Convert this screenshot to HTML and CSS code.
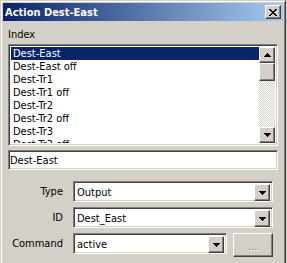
FILE: index.html
```html
<!DOCTYPE html>
<html lang="en">
<head>
  <meta charset="UTF-8" />
  <title>Action Dest-East</title>
  <link rel="stylesheet" href="styles.css">
</head>
<body>
<div class="window">
  <div class="titlebar">
    <span class="title">Action Dest-East</span>
    <div class="close-btn">
      <svg width="8" height="7" viewBox="0 0 8 7" shape-rendering="crispEdges"><path d="M0 0h2v1H0z M6 0h2v1H6z M1 1h2v1H1z M5 1h2v1H5z M2 2h4v1H2z M3 3h2v1H3z M2 4h4v1H2z M1 5h2v1H1z M5 5h2v1H5z M0 6h2v1H0z M6 6h2v1H6z" fill="#000"/></svg>
    </div>
  </div>

  <div class="content">
    <div class="index-label">Index</div>
    <div class="sunken listbox">
      <ul class="items">
        <li class="selected">Dest-East</li>
        <li>Dest-East off</li>
        <li>Dest-Tr1</li>
        <li>Dest-Tr1 off</li>
        <li>Dest-Tr2</li>
        <li>Dest-Tr2 off</li>
        <li>Dest-Tr3</li>
        <li>Dest-Tr3 off</li>
      </ul>
      <div class="scrollbar">
        <div class="raised sb-btn">
          <svg width="7" height="4" viewBox="0 0 7 4" shape-rendering="crispEdges"><path d="M3 0h1v1H3z M2 1h3v1H2z M1 2h5v1H1z M0 3h7v1H0z" fill="#000"/></svg>
        </div>
        <div class="raised sb-thumb"></div>
        <div class="sb-track"></div>
        <div class="raised sb-btn">
          <svg width="7" height="4" viewBox="0 0 7 4" shape-rendering="crispEdges"><path d="M0 0h7v1H0z M1 1h5v1H1z M2 2h3v1H2z M3 3h1v1H3z" fill="#000"/></svg>
        </div>
      </div>
    </div>

    <div class="sunken textfield">Dest-East</div>

    <div class="form">
      <div class="row">
        <span class="row-label">Type</span>
        <div class="sunken combo wide">
          <span class="combo-text">Output</span>
          <div class="raised combo-btn">
            <svg width="7" height="4" viewBox="0 0 7 4" shape-rendering="crispEdges"><path d="M0 0h7v1H0z M1 1h5v1H1z M2 2h3v1H2z M3 3h1v1H3z" fill="#000"/></svg>
          </div>
        </div>
      </div>
      <div class="row">
        <span class="row-label">ID</span>
        <div class="sunken combo wide">
          <span class="combo-text">Dest_East</span>
          <div class="raised combo-btn">
            <svg width="7" height="4" viewBox="0 0 7 4" shape-rendering="crispEdges"><path d="M0 0h7v1H0z M1 1h5v1H1z M2 2h3v1H2z M3 3h1v1H3z" fill="#000"/></svg>
          </div>
        </div>
      </div>
      <div class="row">
        <span class="row-label">Command</span>
        <div class="sunken combo narrow">
          <span class="combo-text">active</span>
          <div class="raised combo-btn">
            <svg width="7" height="4" viewBox="0 0 7 4" shape-rendering="crispEdges"><path d="M0 0h7v1H0z M1 1h5v1H1z M2 2h3v1H2z M3 3h1v1H3z" fill="#000"/></svg>
          </div>
        </div>
        <div class="raised more-btn">...</div>
      </div>
    </div>
  </div>
</div>
</body>
</html>
```

FILE: styles.css
```css
body {
  margin: 0;
  background: #d4d0c8;
  font-family: 'DejaVu Sans Condensed', 'DejaVu Sans', sans-serif;
  font-stretch: condensed;
  font-size: 11px;
  color: #000;
  overflow: hidden;
}

.window {
  width: 286px;
  height: 268px;
  box-sizing: border-box;
  padding: 2px;
  border: 1px solid;
  border-color: #d4d0c8 #404040 #404040 #d4d0c8;
  box-shadow: inset 1px 1px #fff, inset -1px -1px #808080;
}

/* classic 3d edges */
.raised {
  box-sizing: border-box;
  background: #d4d0c8;
  border: 1px solid;
  border-color: #fff #404040 #404040 #fff;
  box-shadow: inset -1px -1px #808080;
}
.sunken {
  box-sizing: border-box;
  background: #fff;
  border: 1px solid;
  border-color: #808080 #fff #fff #808080;
  box-shadow: inset 1px 1px #404040, inset -1px -1px #d4d0c8;
}

.titlebar {
  height: 18px;
  display: flex;
  align-items: center;
  padding-left: 2px;
  background: linear-gradient(to right, #0a246a, #a6caf0);
  color: #fff;
  font-weight: bold;
}
.title {
  flex: 1;
}
.close-btn {
  width: 16px;
  height: 14px;
  margin-right: 2px;
  box-sizing: border-box;
  display: flex;
  align-items: center;
  justify-content: center;
  background: #d4d0c8;
  border: 1px solid;
  border-color: #fff #404040 #404040 #fff;
  box-shadow: inset -1px -1px #808080;
}
.close-btn svg {
  display: block;
}

.content {
  padding: 7px 5px 0;
}
.index-label {
  line-height: 13px;
  margin-bottom: 3px;
}

.listbox {
  height: 102px;
  display: flex;
  padding: 2px;
}
.items {
  flex: 1;
  margin: 0;
  padding: 0;
  list-style: none;
  overflow: hidden;
}
.items li {
  height: 13px;
  line-height: 13px;
  padding-left: 2px;
  white-space: nowrap;
}
.items li.selected {
  background: #0a246a;
  color: #fff;
}

.scrollbar {
  width: 16px;
  display: flex;
  flex-direction: column;
}
.sb-btn {
  height: 16px;
  display: flex;
  align-items: center;
  justify-content: center;
}
.sb-btn svg, .combo-btn svg {
  display: block;
}
.sb-thumb {
  height: 18px;
}
.sb-track {
  flex: 1;
  background: repeating-conic-gradient(#fff 0 25%, #d4d0c8 0 50%) 0 0 / 2px 2px;
}

.textfield {
  margin-top: 4px;
  height: 20px;
  line-height: 16px;
  padding: 2px 1px;
}

.form {
  margin-top: 11px;
}
.row {
  display: flex;
  align-items: flex-start;
  margin-bottom: 5px;
}
.row-label {
  width: 55px;
  margin-right: 10px;
  text-align: right;
  line-height: 21px;
}
.combo {
  height: 21px;
  display: flex;
  padding: 2px;
}
.combo.wide {
  width: 200px;
}
.combo.narrow {
  width: 154px;
}
.combo-text {
  flex: 1;
  line-height: 17px;
  padding-left: 1px;
}
.combo-btn {
  width: 16px;
  height: 17px;
  display: flex;
  align-items: center;
  justify-content: center;
}
.more-btn {
  width: 40px;
  height: 24px;
  margin-left: 6px;
  display: flex;
  align-items: center;
  justify-content: center;
  color: #808080;
  text-shadow: 1px 1px #fff;
  padding-top: 2px;
}
```
